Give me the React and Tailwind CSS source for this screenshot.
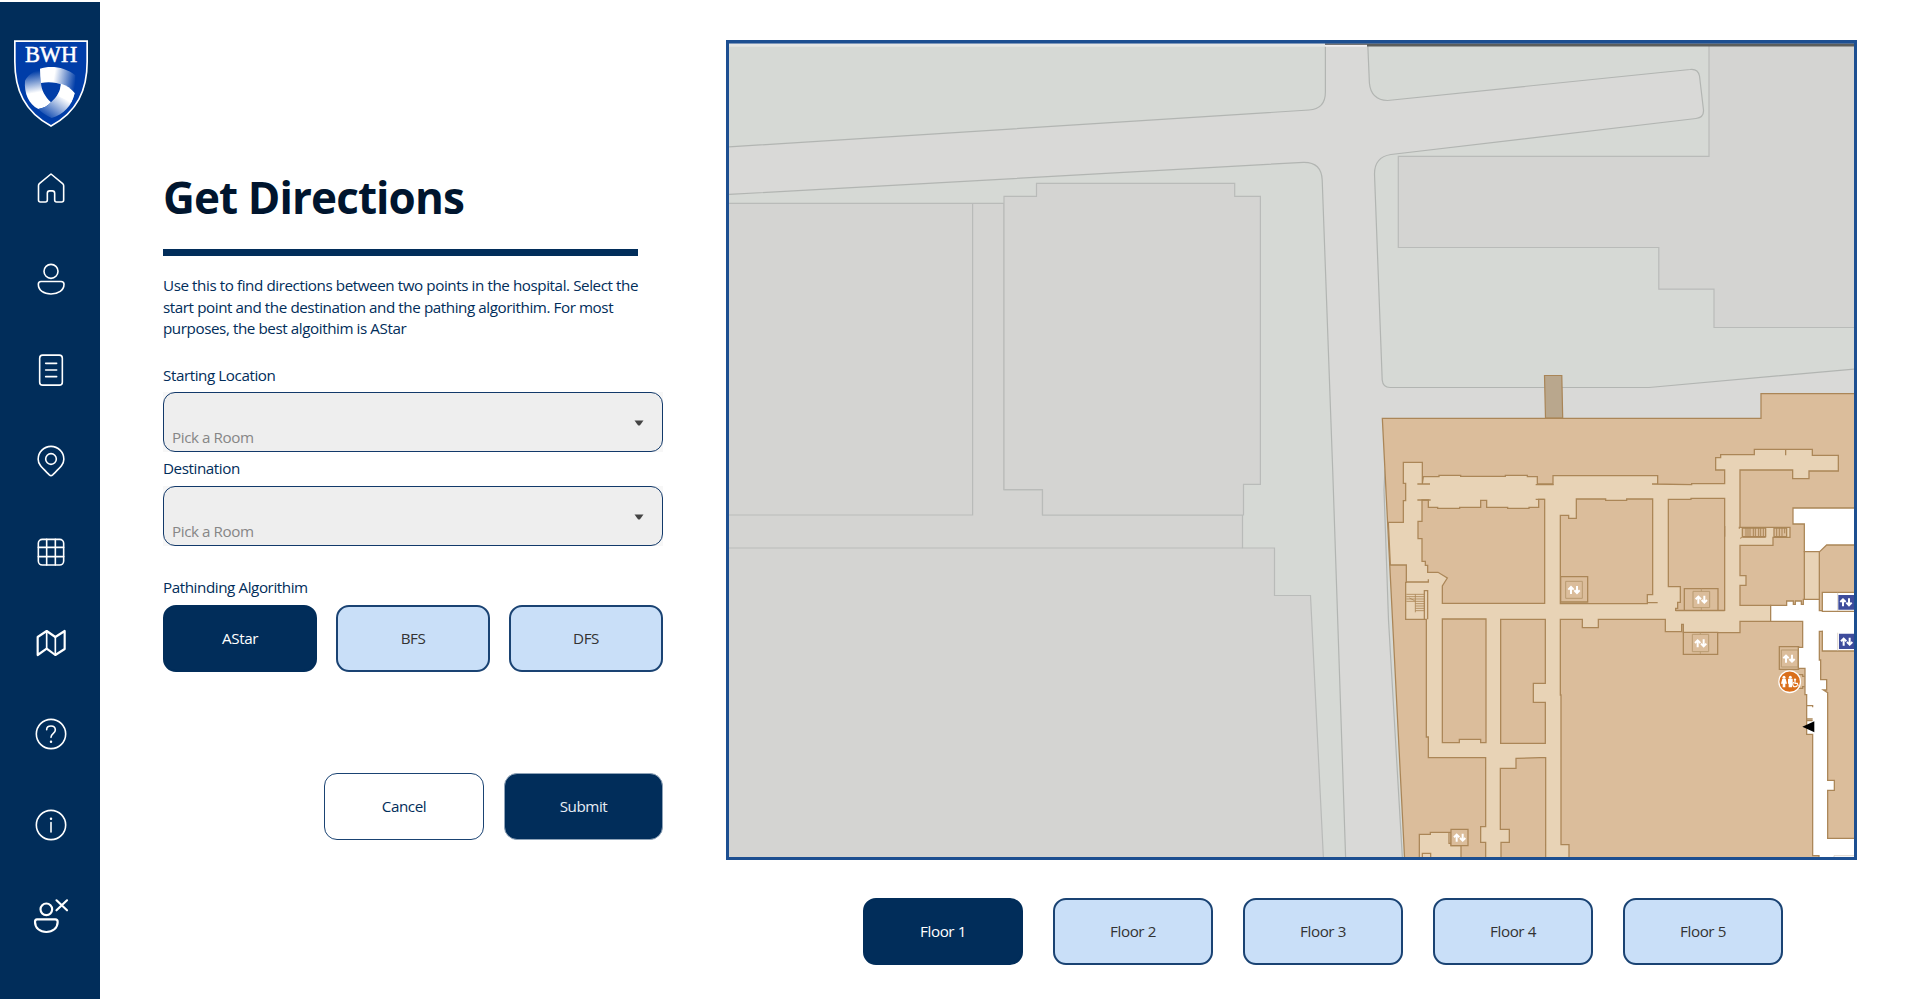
import React from "react";

const iconProps = {
  fill: "none",
  stroke: "#fff",
  strokeWidth: 4.8,
  strokeLinecap: "round",
  strokeLinejoin: "round",
};

function NavIcon({ box, children }) {
  return (
    <a className="flex h-[91px] w-full items-center justify-center">
      <svg className="h-9 w-9" viewBox={box} {...iconProps}>
        {children}
      </svg>
    </a>
  );
}

function Logo() {
  return (
    <svg className="block h-[90px] w-[76px]" viewBox="39 117 228 270">
      <defs>
        <linearGradient id="bandTop" gradientUnits="userSpaceOnUse" x1="140" y1="225" x2="228" y2="240">
          <stop offset="0.25" stopColor="#fff" />
          <stop offset="1" stopColor="#003da8" />
        </linearGradient>
        <linearGradient id="bandRight" gradientUnits="userSpaceOnUse" x1="200" y1="275" x2="145" y2="352">
          <stop offset="0.2" stopColor="#fff" />
          <stop offset="1" stopColor="#1a52b4" />
        </linearGradient>
        <linearGradient id="bandLeft" gradientUnits="userSpaceOnUse" x1="108" y1="300" x2="92" y2="216">
          <stop offset="0.25" stopColor="#fff" />
          <stop offset="1" stopColor="#003da8" />
        </linearGradient>
      </defs>
      <path
        d="M44.500 123.500H261.500V185C261.500 270 232 335 153 378C74 335 44.500 270 44.500 185Z"
        fill="#003da8"
        stroke="#fff"
        strokeWidth="5"
      />
      <text
        x="153"
        y="186"
        textAnchor="middle"
        textLength="156"
        lengthAdjust="spacingAndGlyphs"
        fill="#fff"
        stroke="#fff"
        strokeWidth="1.5"
        fontSize="67"
        fontFamily="'Liberation Serif', serif"
      >
        BWH
      </text>
      <path d="M121 206C98 214 82 228 75 242C72 280 86 312 115 327C131 325 143 318 153 307C135 290 124 270 123 249Z" fill="url(#bandLeft)" />
      <path d="M183 250C198 254 214 264 224 280C216 318 190 344 155 354C138 346 124 337 115 327C131 325 143 318 153 307C172 290 182 272 183 250Z" fill="url(#bandRight)" />
      <path d="M120 206C150 196 195 200 226 226V282C200 254 165 242 123 249C121 235 120 220 120 206Z" fill="url(#bandTop)" />
      <path d="M183 251C200 256 213 265 224 279L214 306L178 290Z" fill="#fff" />
    </svg>
  );
}

function Sidebar() {
  return (
    <nav className="mt-[2px] flex w-[100px] shrink-0 flex-col items-center bg-[#012d5a] pt-[37px] pl-[2px]">
      <Logo />
      <div className="mt-[13px] flex w-full flex-col">
        <NavIcon box="99 507 108 108">
          <path d="M153 519L118 548Q115.500 550.500 115.500 554V597Q115.500 603 121 603H136Q142 603 142 597V577Q142 569.500 149 569.500H157Q164 569.500 164 577V597Q164 603 170 603H185Q191 603 191 597V554Q191 550.500 188 548Z" />
        </NavIcon>
        <NavIcon box="99 783 108 108">
          <circle cx="153" cy="814" r="21" />
          <path d="M123 844.500H183Q192 844.500 192 853C192 871 175 882 153 882C131 882 115 871 115 853Q115 844.500 123 844.500Z" />
        </NavIcon>
        <NavIcon box="99 1056 108 108">
          <rect x="119" y="1065.500" width="68" height="90" rx="9" />
          <path d="M137 1090H170M137 1110H170M137 1130H170" />
        </NavIcon>
        <NavIcon box="99 1329 108 108">
          <circle cx="153" cy="1377" r="16" />
          <path d="M153 1339A38.500 38.500 0 0 1 191.500 1377.500C191.500 1394 180 1403 158 1424.500Q153 1429 148 1424.500C126 1403 114.500 1394 114.500 1377.500A38.500 38.500 0 0 1 153 1339Z" />
        </NavIcon>
        <NavIcon box="99 102 108 108">
          <rect x="115" y="118" width="76" height="77" rx="12" />
          <path d="M140 118V195M166 118V195M115 142H191M115 170H191" />
        </NavIcon>
        <NavIcon box="99 375 108 108">
          <g strokeWidth="6.500">
            <path d="M113 411L140 393L166 411L194 393V447L166 465L140 446L113 465Z" />
            <path strokeWidth="5" d="M140 393V446M166 411V465" />
          </g>
        </NavIcon>
        <NavIcon box="99 648 108 108">
          <circle cx="153" cy="702" r="44" />
          <path d="M140 689C140 682 145.500 678 153 678C160.500 678 166 683 166 690C166 700 153 700 153 712" />
          <circle cx="153" cy="725" r="2" strokeWidth="3.500" />
        </NavIcon>
        <NavIcon box="99 921 108 108">
          <circle cx="153" cy="975" r="44" />
          <path d="M153 968V996" />
          <circle cx="153" cy="956" r="2" strokeWidth="3.500" />
        </NavIcon>
        <NavIcon box="99 1194 108 108">
          <g strokeWidth="6.500">
            <circle cx="139" cy="1228" r="17.500" />
            <path d="M111 1258H166Q173 1258 173 1266C173 1284 158 1296 139 1296C120 1296 105 1284 105 1266Q105 1258 111 1258Z" />
            <path d="M169.500 1201L201 1231M201 1201L169.500 1231" />
          </g>
        </NavIcon>
      </div>
    </nav>
  );
}

function RoomSelect() {
  return (
    <div className="bg-[#f7f7f7]">
      <div className="flex h-[60px] items-end justify-between rounded-[12px] border-[1.5px] border-[#12396a] bg-[#eeeeee] pr-[18px] pl-2">
        <span className="pb-[3px] text-[#868686]">Pick a Room</span>
        <svg className="mb-[25px] h-[6px] w-[10px]" viewBox="0 0 10 6">
          <path d="M0.500 0.500H9.500L6 5.200Q5 6 4 5.200Z" fill="#444" />
        </svg>
      </div>
    </div>
  );
}

function Choice({ label, active, size }) {
  const tone = active
    ? "border-[#012d5a] bg-[#012d5a] text-white"
    : "border-[#1a4373] bg-[#c9dff8] text-[#333333]";
  return (
    <button className={`flex h-[67px] items-center justify-center rounded-[13px] border-2 pt-px ${size} ${tone}`}>
      {label}
    </button>
  );
}

function DirectionsForm() {
  return (
    <section className="ml-[63px] flex w-[500px] shrink-0 flex-col pt-[167px]">
      <h1 className="h-[60px] text-[44px] leading-[61px] font-bold tracking-[-0.9px] whitespace-nowrap text-[#00152e]">
        Get Directions
      </h1>
      <hr className="mt-[22px] h-[7px] w-[475px] border-0 bg-[#012d5a]" />
      <p className="mt-[19px] h-[65px] leading-[21.500px] whitespace-nowrap">
        Use this to find directions between two points in the hospital. Select the
        <br />
        start point and the destination and the pathing algorithim. For most
        <br />
        purposes, the best algoithim is AStar
      </p>
      <label className="mt-[25px] h-[27px]">Starting Location</label>
      <RoomSelect />
      <label className="mt-[6px] h-[28px]">Destination</label>
      <RoomSelect />
      <label className="mt-[31px] h-[28px]">Pathinding Algorithim</label>
      <div className="flex justify-between">
        <Choice label="AStar" active size="w-[154px]" />
        <Choice label="BFS" size="w-[154px]" />
        <Choice label="DFS" size="w-[154px]" />
      </div>
      <div className="mt-[101px] flex justify-end gap-5">
        <button className="flex h-[67px] w-[160px] items-center justify-center rounded-[13px] border-[1.5px] border-[#1a4373] bg-white pt-px">
          Cancel
        </button>
        <button className="flex h-[67px] w-[159px] items-center justify-center rounded-[13px] border border-[#8fa3b8] bg-[#012d5a] pt-px text-[#e8edf5]">
          Submit
        </button>
      </div>
    </section>
  );
}

function Arrows({ x, y }) {
  return (
    <g transform={`translate(${x} ${y})`} fill="none" stroke="#fff" strokeWidth="6">
      <path d="M-9 12V-6M9 -12V6" />
      <path d="M-17 -1L-9 -9L-1 -1M1 1L9 9L17 1" />
    </g>
  );
}

function Streets() {
  return (
    <g stroke="#b2b5b2" strokeWidth="1.200">
      <rect x="729" y="43" width="1125" height="814" fill="#d9d9d7" stroke="none" />
      <g fill="#d6d9d5">
        <path d="M728 147L1309 110Q1325.400 109 1325.400 92V40H728Z" />
        <path d="M728 194.500L1303.500 162.300Q1321.500 162 1322.200 180L1332.700 470L1345.700 860H728Z" />
        <path d="M1367.600 40L1369.400 83Q1371 100 1387.500 100.500L1690 69.500Q1698 68.500 1699.500 76L1703.500 110Q1704 117.500 1696 118.500L1390.900 154.500Q1374.500 157 1374.500 174L1382.200 380Q1383 387.500 1390 387.500H1649L1860 368.500V40Z" />
        <path d="M1385 470L1384 490L1388.500 620L1402.500 860H1410L1392 470Z" />
      </g>
      <g fill="#d4d4d2" stroke="#b9bbb9">
        <path d="M728 203.300H1004V489.700H1042.500V515H1242.500V548H1274.500V595.500H1310.500L1323.500 860H728Z" />
        <path d="M1004 196.300H1036.500V183.300H1234.700V196.300H1260.400V484.300H1243.500V515H1042.500V489.700H1004Z" />
        <path d="M1709 40V156.300H1398.300V247.500H1658.800V289.200H1714V327.500H1860V40Z" />
        <path fill="none" d="M972.600 203.300V515H728M1242.500 548H728" />
      </g>
      <path d="M1544.500 375.500H1561.800L1562.700 418H1545.500Z" fill="#b9a78d" stroke="#a98557" />
    </g>
  );
}

function Building() {
  return (
    <g transform="translate(1370 370) scale(0.33333)" stroke="#ab8657" strokeWidth="3.800">
      <path fill="#dbbd9b" d="M37 145H1173V71H1460V1470H104Z" />
      <path
        fill="#e8d3b6"
        d="M100 277H157V342L160 320H207V316H272V319H406V316H472V320H502V342H549V317H863V342H846L965 344V341H1064V300H1037V263H1052V254H1153V238H1327V256H1405V303H1317V326H1268V300H1110V472H1260V502H1209V526H1110V617H1128V646H1110V706H1202V754H1110V788H940V763H935V785H886V748H685V773H637V748H571V975H573V1424H597V1470H527V1163H510L438 1165V1195H391V1378H418V1417H393V1470H347V1417H332V1370H347V1163H175V1101H169V748H107V637H109V585H61L55 457H100V392H107V340H100Z"
      />
      <g fill="#dbbd9b">
        <path d="M175 390V412H203V415H269V412H332V391H350V412H413V415H477V412H506V388H524V700H217V648L232 624L204 607H173V586H166V574H156V506H144V454H156V390Z" />
        <path d="M571 436H596V445H619V387H707V391H770V387H848V674H832V701H571Z" />
        <path d="M895 388H963V385H1064V721H917V715H923V697H931V650H895Z" />
        <path d="M217 747H348V1118H332V1108H268V1118H217Z" />
        <path d="M392 748H526V940H490V997H526V1120H392Z" />
        <path d="M572 620H653V696H572Z" />
        <path d="M943 656H1044V721H943Z" />
        <path d="M940 787H1043V853H940Z" />
        <path d="M1228 830H1286V898H1228Z" />
      </g>

      {/* door stubs */}
      <path fill="none" d="M142 342H180M142 390H182M497 344H551M497 388H524M1247 240V256M832 698H863M917 722H1064M109 636H175V628M163 748V662H173V748M1064 468V500M1108 470V476" />

      {/* stairwells */}
      <path fill="none" strokeWidth="2.500" d="M109 673H163M109 680H163M109 687H163M109 694H163M118 684L134 692M136 673V727M136 701H163M136 708H163M136 715H163M136 722H163" />
      <path fill="#dbbd9b" d="M1117 474H1187V500H1117ZM1212 474H1250V500H1212Z" />
      <path fill="none" strokeWidth="3" d="M1128 474V500M1134 474V500M1140 474V500M1150 474V500M1156 474V500M1166 474V500M1172 474V500M1180 474V500M1220 474V500M1228 474V500M1236 474V500M1244 474V490M1110 505L1117 502H1187" />

      {/* south-west room */}
      <path fill="#e8d3b6" d="M148 1470V1393H181V1387H243V1427H273V1470Z" />
      <path fill="none" d="M157 1470V1450H182V1470M237 1388V1420H244" />
      <path fill="#dbbd9b" d="M243 1378H294V1427H243Z" />

      {/* lift cars */}
      <g fill="#dbbd9b" strokeWidth="3" stroke="#b99a70">
        <path d="M587 634H637V685H587Z" />
        <path d="M994 656V664M969 664H1019V713H969ZM994 713V720" />
        <path d="M991 788V793M967 793H1016V845H967ZM991 845V852" />
        <path d="M1234 840H1284V891H1234Z" />
      </g>
      <Arrows x={612} y={660} />
      <Arrows x={994} y={689} />
      <Arrows x={992} y={820} />
      <Arrows x={1257} y={866} />
      <Arrows x={269} y={1403} />

      {/* public corridors */}
      <g fill="#fff">
        <path d="M1269 414H1460V525H1370L1349 545H1303V462H1269Z" />
        <path d="M1202 706H1250V693H1270V703H1276V693H1294V703H1300V688H1348V722H1357H1460V784H1348V870H1352V929H1370V960H1360L1373 968V1231H1393V1261H1373V1405H1460V1470H1347V1457H1328V1093H1310V974H1305V895H1285V832H1298V754H1202Z" />
        <path d="M1357 667H1460V724H1357Z" />
        <path d="M1357 784H1460V843H1357Z" />
      </g>
      <path fill="#e8d3b6" d="M1303 545H1348V688H1303Z" />
      <path fill="none" strokeWidth="2" stroke="#cfc3b3" d="M1403 668V723M1403 785V842M1392 1470V1457H1460" />
      <path stroke="none" fill="#fff" d="M1359 780H1460V788H1359Z" />
      <path fill="none" d="M1310 1007H1328V1012M1310 1047H1328M1310 1052H1328M1286 914H1298V919H1304M1286 955H1298V950H1304" />
      <path stroke="none" fill="#3e4c9c" d="M1405 675H1460V719H1405ZM1407 791H1460V837H1407Z" />
      <Arrows x={1428} y={697} />
      <Arrows x={1430} y={815} />
      <path stroke="none" fill="#000" d="M1297 1070L1333 1054V1087Z" />

      {/* restroom marker */}
      <circle cx="1259" cy="935" r="32.500" fill="#da6f1b" stroke="#fff" />
      <g stroke="none" fill="#fff">
        <circle cx="1242" cy="922" r="4.500" />
        <path d="M1237 926H1247L1251 941H1246V952H1238V941H1233Z" />
        <circle cx="1261" cy="922" r="4.500" />
        <path d="M1254 926H1268V941H1266V952H1256V941H1254Z" />
        <circle cx="1275" cy="929" r="3.500" />
      </g>
      <path fill="none" stroke="#fff" strokeWidth="3.500" d="M1275 932V940H1282L1285 949M1272 937A7 7 0 1 0 1281 947" />
    </g>
  );
}

function FloorMap() {
  return (
    <div className="mt-10 h-[820px] w-[1131px] border-[3px] border-[#1d4f91]">
      <svg className="block h-[814px] w-[1125px]" viewBox="729 43 1125 814">
        <Streets />
        <Building />
        <rect x="729" y="43" width="596" height="3.700" fill="#e4e5e3" />
        <rect x="1325" y="43" width="42" height="3.700" fill="#f1eef0" />
        <rect x="1325" y="43" width="42" height="1.800" fill="#555" />
        <rect x="1367" y="43" width="487" height="3.500" fill="#5c5e5c" />
        <rect x="729" y="43" width="1125" height="0.700" fill="#4f75a8" />
      </svg>
    </div>
  );
}

export default function App() {
  const floors = ["Floor 1", "Floor 2", "Floor 3", "Floor 4", "Floor 5"];
  return (
    <div className="flex h-[999px] w-[1920px] overflow-hidden bg-white font-['Open_Sans','Noto_Sans',sans-serif] text-[15.2px] leading-[21.500px] tracking-[-0.42px] text-[#012d5a]">
      <Sidebar />
      <DirectionsForm />
      <main className="ml-[63px] flex flex-col">
        <FloorMap />
        <div className="mt-[38px] flex gap-[30px] pl-[137px]">
          {floors.map((name, i) => (
            <Choice key={name} label={name} active={i === 0} size="w-[160px]" />
          ))}
        </div>
      </main>
    </div>
  );
}
